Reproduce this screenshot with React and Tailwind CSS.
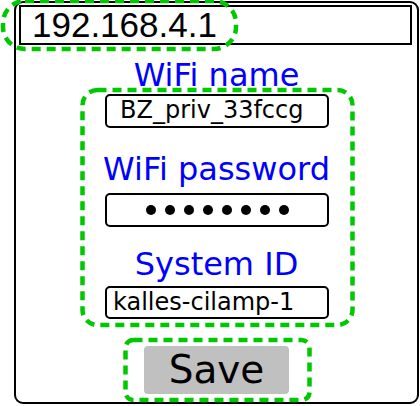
import React from 'react';

const dejavu = { fontFamily: '"DejaVu Sans", Verdana, sans-serif' };

function Field({ children, className = '' }) {
  return (
    <div className={`ml-[89px] self-start w-[224px] border-2 border-black rounded-[5px] bg-white ${className}`}>
      {children}
    </div>
  );
}

function Label({ children, className = '' }) {
  return (
    <div className={`text-[32px] leading-[32px] text-[#0000ff] whitespace-nowrap ${className}`}>{children}</div>
  );
}

function Highlights() {
  // green dashed annotation marks drawn over the form
  return (
    <svg className="absolute inset-0 pointer-events-none" width="420" height="406">
      <g fill="none" stroke="#00c800" strokeWidth="4.5" strokeDasharray="9 6">
        <rect x="3" y="1" width="233" height="48" rx="22" ry="22" />
        <rect x="82.5" y="90" width="270" height="235" rx="15" ry="15" />
        <rect x="125.5" y="340" width="184" height="60" rx="8" ry="8" />
      </g>
    </svg>
  );
}

export default function App() {
  const dots = [0, 1, 2, 3, 4, 5, 6, 7];

  return (
    <div className="relative w-[420px] h-[406px] bg-white overflow-hidden" style={dejavu}>
      <div className="mt-[1px] ml-[14px] w-[405px] h-[403px] border-2 border-black rounded-[9px] flex flex-col items-center">
        <div className="mt-[2px] ml-[3px] self-start w-[393px] h-[40px] border-2 border-black flex items-center">
          <span className="pl-[11px] text-[35px] leading-[36px] text-black" style={{ fontFamily: '"Liberation Sans", Arial, sans-serif' }}>
            192.168.4.1
          </span>
        </div>

        <Label className="mt-[14px]">WiFi name</Label>
        <Field className="mt-[3px] h-[34px]">
          <div className="pl-[13px] text-[24px] leading-[28px] text-black">BZ_priv_33fccg</div>
        </Field>

        <Label className="mt-[25px]">WiFi password</Label>
        <Field className="mt-[8px] h-[34px] flex items-center justify-center gap-[9px]">
          {dots.map((d) => (
            <span key={d} className="w-[10px] h-[10px] rounded-full bg-black" />
          ))}
        </Field>

        <Label className="mt-[21px]">System ID</Label>
        <Field className="mt-[6px] h-[33px]">
          <div className="pl-[6px] text-[24px] leading-[28px] text-black">kalles-cilamp-1</div>
        </Field>

        <button className="mt-[27px] w-[145px] h-[48px] bg-[#c0c0c0] rounded-[4px] text-[39px] leading-[48px] text-black">
          Save
        </button>
      </div>
      <Highlights />
    </div>
  );
}
